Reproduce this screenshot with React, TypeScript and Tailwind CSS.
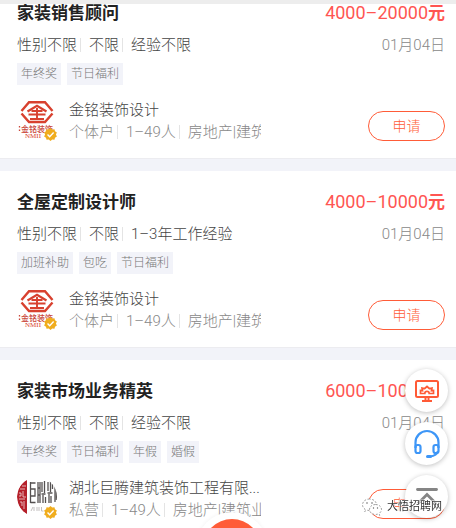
import React from 'react';

interface Job {
  id: number;
  title: string;
  salary: string;
  date: string;
  requirements: string[];
  tags: string[];
  company: string;
  companyInfo: string[];
  logo: 'jinming' | 'juteng';
}

const jobs: Job[] = [
  {
    id: 1,
    title: '家装销售顾问',
    salary: '4000–20000',
    date: '01月04日',
    requirements: ['性别不限', '不限', '经验不限'],
    tags: ['年终奖', '节日福利'],
    company: '金铭装饰设计',
    companyInfo: ['个体户', '1–49人', '房地产|建筑业'],
    logo: 'jinming',
  },
  {
    id: 2,
    title: '全屋定制设计师',
    salary: '4000–10000',
    date: '01月04日',
    requirements: ['性别不限', '不限', '1–3年工作经验'],
    tags: ['加班补助', '包吃', '节日福利'],
    company: '金铭装饰设计',
    companyInfo: ['个体户', '1–49人', '房地产|建筑业'],
    logo: 'jinming',
  },
  {
    id: 3,
    title: '家装市场业务精英',
    salary: '6000–10000',
    date: '01月04日',
    requirements: ['性别不限', '不限', '经验不限'],
    tags: ['年终奖', '节日福利', '年假', '婚假'],
    company: '湖北巨腾建筑装饰工程有限...',
    companyInfo: ['私营', '1–49人', '房地产|建筑业'],
    logo: 'juteng',
  },
];

const JinmingLogo: React.FC = () => (
  <svg viewBox="0 0 40 40" className="size-10" aria-hidden="true">
    <g fill="none" stroke="#d8412f">
      <path d="M4.500 12 12 3.300h16L35.500 12" strokeWidth="2.400" />
      <path d="M4.500 14.500 12 23h16L35.500 14.500" strokeWidth="2.400" />
      <path d="M10.500 12.500 20 6.800 29.500 12.500" strokeWidth="2.200" />
      <path d="M14.500 12h11M11.500 15.500h17M20 9v11M13 20h14" strokeWidth="1.900" />
    </g>
    <text x="20" y="32.500" textAnchor="middle" fontSize="8" fontWeight="500" fill="#c9483c">
      金铭装饰
    </text>
    <text x="16" y="39" textAnchor="middle" fontSize="7" fill="#d8412f" className="font-['Liberation_Serif',serif]">
      NMII
    </text>
    <path d="M2.500 27v1.500M2.500 30.500V32" stroke="#c9483c" strokeWidth="1.300" />
  </svg>
);

const JutengLogo: React.FC = () => (
  <svg viewBox="0 0 40 40" className="size-10 rounded-full" aria-hidden="true">
    <path d="M10 3v34C4 34 0 27 0 20S4 6 10 3z" fill="#b5202a" />
    <path
      d="M3 12h5M2 16h2v3H2M6 14v6h3M2 22h6M3 25h2v4M7 24v8M5 9h4"
      fill="none"
      stroke="#f3d9d9"
      strokeWidth="0.800"
    />
    <g transform="translate(12 0)" fill="none" stroke="#555151" strokeWidth="1.300">
      <path d="M1.500 5v21M1.500 6h5M2 12h4v7H2M1.500 25.500h5" />
      <path d="M9 5v21M11 5v21M9 11h2M9 18h2M13 5v10M15.500 4v12M12.500 17h4M14 18v8M16.500 20v6" />
      <path d="M19 5v9M21.500 4v11M18.500 16h5M20 17v9M22 19v7M23.500 7v5" />
      <path d="M26 8v17M27.500 11v12" />
    </g>
    <path d="M14 34l2-4M17 34v-4M20 34v-4M22 30v4M24.500 30v4h2" fill="none" stroke="#c4c0c0" />
  </svg>
);

const VerifiedBadge: React.FC = () => (
  <svg viewBox="0 0 24 24" className="absolute right-0 -bottom-0.5 size-[13px]" aria-hidden="true">
    <path
      d="M12 0l3.200 2.700 4.100-.5 1 4 3.500 2.200L22 12l1.800 3.700-3.500 2.200-1 4-4.100-.5L12 24l-3.200-2.600-4.100.5-1-4-3.500-2.200L2 12 .2 8.400l3.500-2.200 1-4 4.100.5z"
      fill="#f0ad1e"
    />
    <path d="M6.500 12l4 4 7.200-7.500" fill="none" stroke="#fff" strokeWidth="2.600" />
  </svg>
);

const InfoList: React.FC<{ items: string[] }> = ({ items }) => (
  <ul className="flex items-center whitespace-nowrap">
    {items.map((item, index) => (
      <li key={item} className="flex items-center">
        {index > 0 && <span className="mr-2 ml-[3px] h-3.5 w-px bg-[#e4e4e4]" />}
        {item}
      </li>
    ))}
  </ul>
);

const JobCard: React.FC<{ job: Job }> = ({ job }) => (
  <article className="border-b border-[#ececf0] bg-white pt-5 pr-[11px] pb-[15px] pl-[17px]">
    <div className="flex h-[22px] items-center justify-between leading-[22px]">
      <h2 className="text-[17px] font-bold text-[#222]">{job.title}</h2>
      <p className="text-[18px] text-[#ff5552]">
        {job.salary}
        <span className="text-[17px] font-bold">元</span>
      </p>
    </div>
    <div className="mt-[11px] flex h-5 justify-between text-[15px] leading-5 font-light text-[#444]">
      <InfoList items={job.requirements} />
      <time className="text-[#888]">{job.date}</time>
    </div>
    <ul className="mt-2 flex gap-1.5">
      {job.tags.map((tag) => (
        <li key={tag} className="h-[22px] bg-[#f2f3f9] px-1 text-xs leading-[22px] font-light text-[#777]">
          {tag}
        </li>
      ))}
    </ul>
    <div className="mt-3.5 flex items-start justify-between">
      <div className="flex">
        <div className="relative size-10">
          {job.logo === 'jinming' ? <JinmingLogo /> : <JutengLogo />}
          <VerifiedBadge />
        </div>
        <div className="ml-3 h-11 w-48 overflow-hidden text-[15px] leading-[22px] font-light whitespace-nowrap">
          <h3 className="text-[#444]">{job.company}</h3>
          <div className="text-[#888]">
            <InfoList items={job.companyInfo} />
          </div>
        </div>
      </div>
      <button
        type="button"
        className="mt-3 h-[30px] w-[77px] rounded-full border border-[#ff5c38] text-sm leading-none font-light text-[#ff5c38]"
      >
        申请
      </button>
    </div>
  </article>
);

const FloatButton: React.FC<{ label: string; children: React.ReactNode }> = ({ label, children }) => (
  <button
    type="button"
    aria-label={label}
    className="flex size-[43px] items-center justify-center rounded-full bg-white shadow-[0_1px_5px_rgba(0,0,0,0.25)]"
  >
    {children}
  </button>
);

const FloatMenu: React.FC = () => (
  <div className="fixed right-2 bottom-2.5 flex flex-col gap-2.5">
    <FloatButton label="电脑版">
      <svg viewBox="0 0 26 26" className="size-[26px]" fill="none" stroke="#ff5a36" strokeWidth="2">
        <rect x="2" y="3" width="22" height="16" rx="1.500" />
        <path d="M6.500 15.500v-3l2 .2-.5-2.700 2.700.5L13 8.500l2.300 2 2.700-.5-.5 2.700 2-.2v3h-4.300a2.200 2.200 0 0 0-4.400 0z" strokeWidth="1.700" />
        <path d="M11.500 19v3.500M14.500 19v3.500M8 23h10" />
      </svg>
    </FloatButton>
    <FloatButton label="客服">
      <svg viewBox="0 0 28 30" className="h-[30px] w-7" fill="none" stroke="#3d96f7" strokeWidth="2.200">
        <path d="M2.500 19v-5.500a11.500 11.500 0 0 1 23 0V19" />
        <rect x="2.500" y="16" width="5" height="8" rx="2" />
        <rect x="20.500" y="16" width="5" height="8" rx="2" />
        <path d="M25 22c-1 3.500-4 5-8 5.500" />
        <path d="M14.500 27.500h3" strokeWidth="3" strokeLinecap="round" />
      </svg>
    </FloatButton>
    <FloatButton label="返回顶部">
      <svg viewBox="0 0 24 24" className="size-6" fill="none" stroke="#858585" strokeWidth="2.800">
        <path d="M2.500 4.500h19" strokeLinecap="round" />
        <path d="M3 18.500 12 9.500l9 9" />
      </svg>
    </FloatButton>
  </div>
);

const AccountMark: React.FC = () => (
  <div className="fixed right-3.5 bottom-3 flex items-center gap-1">
    <svg viewBox="0 0 22 18" className="h-[18px] w-[22px]" aria-hidden="true">
      <g fill="#fff" stroke="#888" strokeWidth="0.800" strokeDasharray="2 1.500">
        <path d="M8.500 1C4.500 1 1.500 3.500 1.500 6.800c0 1.800 1 3.400 2.600 4.500l-.7 2.200 2.600-1.300c.8.200 1.600.3 2.500.3 4 0 7-2.500 7-5.700S12.500 1 8.500 1z" />
        <path d="M14.500 6.500c-3.500 0-6 2.200-6 5s2.500 5 6 5c.7 0 1.400-.1 2-.3l2.200 1.200-.6-1.900c1.400-1 2.400-2.400 2.400-4 0-2.800-2.500-5-6-5z" />
      </g>
      <g fill="#666">
        <circle cx="6" cy="5" r="0.800" />
        <circle cx="11" cy="5" r="0.800" />
        <circle cx="12.500" cy="10" r="0.700" />
        <circle cx="16.500" cy="10" r="0.700" />
      </g>
    </svg>
    <span className="text-[11px] leading-4 text-[#333] [paint-order:stroke] [-webkit-text-stroke:1px_#fff]">
      大悟招聘网
    </span>
  </div>
);

const App: React.FC = () => (
  <div className="h-screen overflow-hidden bg-[#f2f3f9] font-[Roboto,'Noto_Sans_CJK_SC',sans-serif]">
    <header className="relative z-10 h-1 bg-[#ededed]" />
    <main className="-mt-[22px] flex flex-col gap-3">
      {jobs.map((job) => (
        <JobCard key={job.id} job={job} />
      ))}
    </main>
    <button
      type="button"
      aria-label="发布"
      className="fixed -bottom-14 left-1/2 size-[72px] -translate-x-8 rounded-full bg-white p-[7px] shadow-[0_0_4px_rgba(0,0,0,0.06)]"
    >
      <span className="block size-full rounded-full bg-[#ff5c38]" />
    </button>
    <FloatMenu />
    <AccountMark />
  </div>
);

export default App;
